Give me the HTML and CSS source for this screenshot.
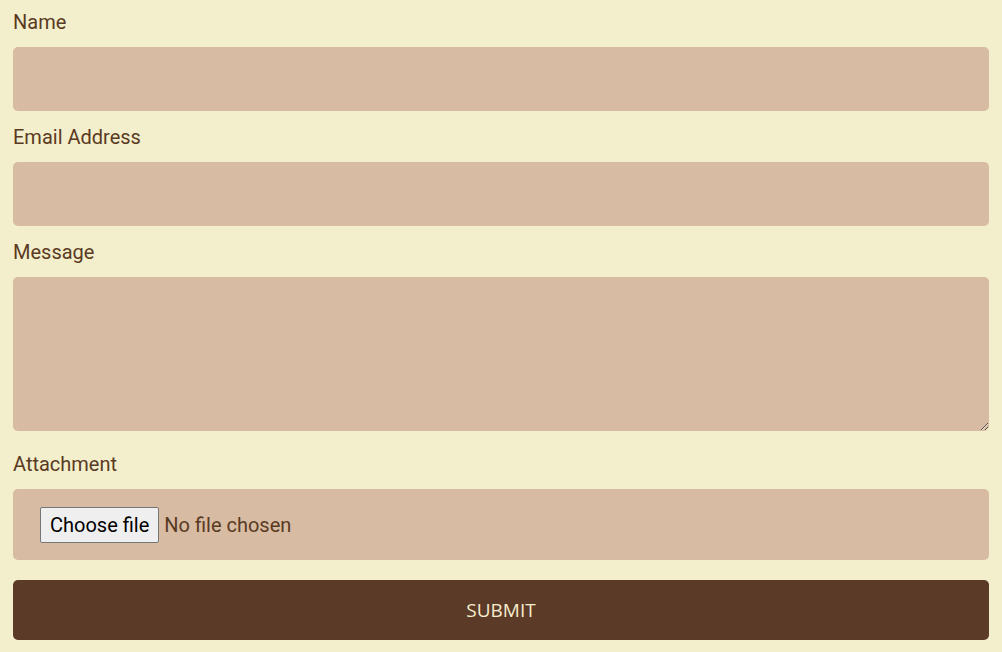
FILE: index.html
```html
<!DOCTYPE html>
<html lang="en">
<head>
<meta charset="utf-8">
<title>Contact</title>
<link rel="stylesheet" href="styles.css">
</head>
<body>
<form class="contact-form">
  <label class="field-label" for="name">Name</label>
  <input class="field-input" type="text" id="name">
  <label class="field-label" for="email">Email Address</label>
  <input class="field-input" type="email" id="email">
  <label class="field-label" for="message">Message</label>
  <textarea class="field-input field-textarea" id="message"></textarea>
  <label class="field-label" for="file">Attachment</label>
  <div class="file-box">
    <input class="file-hidden" type="file" id="file">
    <label class="file-btn" for="file">Choose file</label>
    <span class="file-status">No file chosen</span>
  </div>
  <button class="submit-btn" type="button">SUBMIT</button>
</form>
</body>
</html>
```
FILE: styles.css
```css
html, body {
  margin: 0;
  padding: 0;
  background: #f3eecc;
}
.contact-form {
  display: flex;
  flex-direction: column;
  padding: 7px 13px 0;
  font-family: Roboto, "Liberation Sans", sans-serif;
}
.field-label {
  display: block;
  font-size: 20px;
  line-height: 30px;
  color: #5a3a22;
  margin-bottom: 10px;
}
.field-input {
  display: block;
  box-sizing: border-box;
  width: 100%;
  height: 64px;
  border: none;
  border-radius: 5px;
  background: #d7bba2;
  margin: 0 0 11px;
  font-family: Roboto, sans-serif;
  font-size: 20px;
  outline: none;
}
.field-textarea {
  height: 154px;
  margin-bottom: 18px;
  resize: vertical;
}
.file-box {
  display: flex;
  align-items: center;
  box-sizing: border-box;
  height: 71px;
  padding: 1px 27px 0;
  border-radius: 5px;
  background: #d7bba2;
  margin-bottom: 20px;
}
.file-hidden {
  display: none;
}
.file-btn {
  box-sizing: border-box;
  height: 36px;
  display: flex;
  align-items: center;
  font-family: Roboto, sans-serif;
  font-size: 20px;
  color: #000;
  background: #efefef;
  border: 1px solid #767676;
  border-radius: 2px;
  padding: 0 9px;
  margin-right: 5px;
}
.file-status {
  font-size: 20px;
  color: #5a3a22;
}
.submit-btn {
  display: block;
  width: 100%;
  height: 60px;
  border: none;
  border-radius: 5px;
  background: #5c3a28;
  color: #f5edcc;
  font-family: "Open Sans", sans-serif;
  font-size: 19px;
}
```
